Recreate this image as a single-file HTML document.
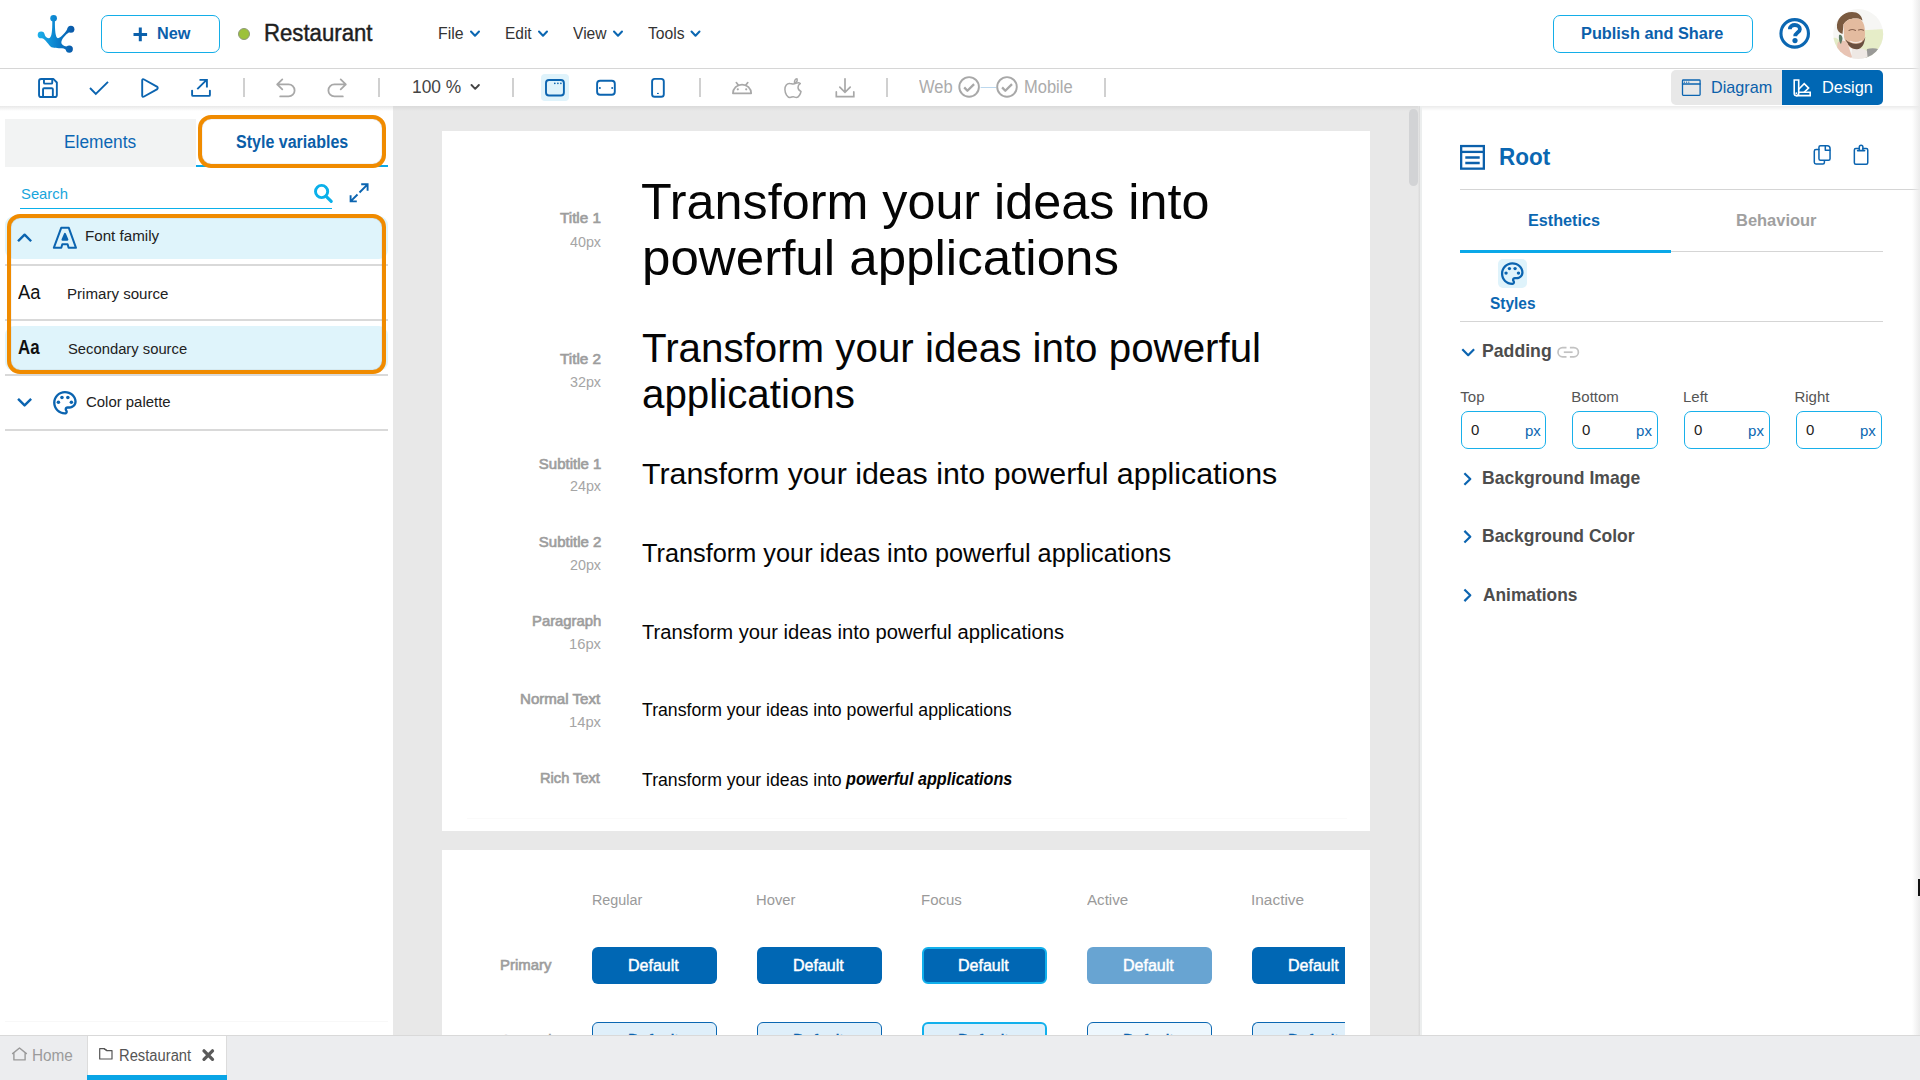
<!DOCTYPE html>
<html><head><meta charset="utf-8"><style>
*{margin:0;padding:0;box-sizing:border-box}
html,body{width:1920px;height:1080px;overflow:hidden;background:#fff;font-family:"Liberation Sans",sans-serif;position:relative}
.t{position:absolute;line-height:1;white-space:nowrap;transform-origin:0 0}
.a{position:absolute}
svg{position:absolute;overflow:visible}

</style></head><body>
<!-- top bar -->
<div class="a" style="left:0;top:68px;width:1920px;height:1px;background:#d6d6d6"></div>
<!-- canvas bg -->
<div class="a" style="left:393px;top:106px;width:1027px;height:930px;background:#e8e8e8"></div>
<div class="a" style="left:393px;top:106px;width:1027px;height:5px;background:linear-gradient(#dadada,rgba(232,232,232,0))"></div>
<!-- left panel -->
<div class="a" style="left:0;top:106px;width:393px;height:930px;background:#fff"></div>
<div class="a" style="left:0;top:106px;width:393px;height:5px;background:linear-gradient(#e8e8e8,rgba(255,255,255,0))"></div>
<div class="a" style="left:5px;top:119px;width:191px;height:48px;background:#f2f3f3"></div>
<div class="a" style="left:196px;top:165px;width:192px;height:2px;background:#0aa8e8"></div>
<div class="a" style="left:20px;top:207.6px;width:312px;height:1.4px;background:#0ab0ea"></div>
<div class="a" style="left:5px;top:216px;width:383px;height:43px;background:#dff4fb;border-radius:9px"></div>
<div class="a" style="left:5px;top:326px;width:383px;height:45px;background:#dff4fb;border-radius:9px"></div>
<div class="a" style="left:5px;top:264px;width:383px;height:2px;background:#d9d9d9"></div>
<div class="a" style="left:5px;top:319px;width:383px;height:2px;background:#d9d9d9"></div>
<div class="a" style="left:5px;top:374px;width:383px;height:2px;background:#d9d9d9"></div>
<div class="a" style="left:5px;top:429px;width:383px;height:2px;background:#d9d9d9"></div>
<div class="a" style="left:5px;top:1021px;width:383px;height:1px;background:#f8f8f8"></div>
<div class="a" style="left:198px;top:115px;width:188px;height:52.5px;border:4px solid #f08b00;border-radius:13px;box-shadow:inset 0 0 1px rgba(0,0,0,.45)"></div>
<div class="a" style="left:7px;top:214px;width:379px;height:159.5px;border:4px solid #f08b00;border-radius:13px;box-shadow:inset 0 0 1px rgba(0,0,0,.45)"></div>
<!-- cards -->
<div class="a" style="left:442px;top:131px;width:928px;height:700px;background:#fff"></div>
<div class="a" style="left:442px;top:850px;width:928px;height:186px;background:#fff"></div>
<div class="a" style="left:467px;top:818px;width:880px;height:1px;background:#fafafa"></div>
<!-- scrollbar -->
<div class="a" style="left:1409px;top:109px;width:9px;height:77px;border-radius:5px;background:#d2d3d5"></div>
<!-- right panel -->
<div class="a" style="left:1418px;top:106px;width:2px;height:930px;background:linear-gradient(90deg,#e6e6e6,#d8d8d8)"></div>
<div class="a" style="left:1420px;top:106px;width:500px;height:930px;background:#fff;border-left:2px solid #eceeee"></div>
<div class="a" style="left:1422px;top:106px;width:498px;height:5px;background:linear-gradient(#ebebeb,rgba(255,255,255,0))"></div>
<div class="a" style="left:1460px;top:188.5px;width:460px;height:1px;background:#d5d5d5"></div>
<div class="a" style="left:1671px;top:250.5px;width:212px;height:1px;background:#d5d5d5"></div>
<div class="a" style="left:1460px;top:249.5px;width:211px;height:3px;background:#0aa8e8"></div>
<div class="a" style="left:1498px;top:259px;width:29px;height:29px;background:#dff3fb;border-radius:5px"></div>
<div class="a" style="left:1460px;top:321px;width:423px;height:1px;background:#d5d5d5"></div>
<div class="a" style="left:1460.5px;top:411px;width:85.5px;height:38px;border:1.5px solid #18b0ea;border-radius:7px"></div>
<div class="a" style="left:1571.5px;top:411px;width:86px;height:38px;border:1.5px solid #18b0ea;border-radius:7px"></div>
<div class="a" style="left:1683.5px;top:411px;width:86px;height:38px;border:1.5px solid #18b0ea;border-radius:7px"></div>
<div class="a" style="left:1795.5px;top:411px;width:86.5px;height:38px;border:1.5px solid #18b0ea;border-radius:7px"></div>
<div class="a" style="left:1912px;top:0;width:8px;height:1036px;background:linear-gradient(90deg,rgba(235,235,235,0),#ebebeb)"></div>
<!-- top bar buttons -->
<div class="a" style="left:101px;top:15px;width:119px;height:38px;border:1.5px solid #14aee8;border-radius:7px"></div>
<div class="a" style="left:1553px;top:15px;width:200px;height:37.5px;border:1.5px solid #14aee8;border-radius:7px"></div>
<div class="a" style="left:238.2px;top:27.8px;width:12px;height:12px;border-radius:50%;background:#9cc13a;border:1px solid #8f9a7a"></div>
<!-- toolbar -->
<div class="a" style="left:541px;top:74px;width:28px;height:27px;background:#dff3fb;border-radius:4px"></div>
<div class="a" style="left:1671px;top:70px;width:212px;height:35px;background:#e8e8e8;border-radius:5px"></div>
<div class="a" style="left:1782px;top:70px;width:101px;height:35px;background:#0067b4;border-radius:0 5px 5px 0"></div>
<!-- card2 buttons -->
<div class="a" style="left:592px;top:947px;width:125px;height:37px;background:#0067b4;border-radius:6px"></div>
<div class="a" style="left:757px;top:947px;width:125px;height:37px;background:#0067b4;border-radius:6px"></div>
<div class="a" style="left:922px;top:947px;width:125px;height:37px;background:#0067b4;border-radius:6px;border:2px solid #12b0ec"></div>
<div class="a" style="left:1087px;top:947px;width:125px;height:37px;background:#68a4d2;border-radius:6px"></div>
<div class="a" style="left:1252px;top:947px;width:93px;height:37px;background:#0067b4;border-radius:6px 0 0 6px"></div>
<div class="a" style="left:592px;top:1022px;width:125px;height:37px;background:#dfeffa;border-radius:6px;border:1.5px solid #0a67b2"></div>
<div class="a" style="left:757px;top:1022px;width:125px;height:37px;background:#dfeffa;border-radius:6px;border:1.5px solid #0a67b2"></div>
<div class="a" style="left:922px;top:1022px;width:125px;height:37px;background:#dfeffa;border-radius:6px;border:2px solid #12b0ec"></div>
<div class="a" style="left:1087px;top:1022px;width:125px;height:37px;background:#eef7fd;border-radius:6px;border:1.5px solid #0a67b2"></div>
<div class="a" style="left:1252px;top:1022px;width:93px;height:37px;background:#dfeffa;border-radius:6px 0 0 6px;border:1.5px solid #0a67b2;border-right:none"></div>
<svg width="1920" height="1080" viewBox="0 0 1920 1080" style="left:0;top:0" fill="none" stroke-linecap="round" stroke-linejoin="round">
<defs>
<linearGradient id="lg" x1="38" y1="0" x2="73" y2="0" gradientUnits="userSpaceOnUse"><stop offset="0" stop-color="#1db0ea"/><stop offset="0.55" stop-color="#0a7fcc"/><stop offset="1" stop-color="#0a59a8"/></linearGradient>
<filter id="bl" x="-20%" y="-20%" width="140%" height="140%"><feGaussianBlur stdDeviation="0.7"/></filter>
<clipPath id="av"><circle cx="1858.2" cy="34" r="25"/></clipPath>
</defs>
<!-- logo -->
<g fill="url(#lg)" stroke="none">
<circle cx="53.6" cy="18.2" r="3.3"/><circle cx="70.9" cy="29.3" r="3.5"/><circle cx="41.1" cy="34.9" r="3.4"/><circle cx="69.3" cy="49.1" r="3.6"/>
<path d="M40.5,37.5 C44.5,38.5 47.5,43 50.5,46.5 C53,48.5 58,48 62,48.2 C64.5,48.5 66,49.5 67.5,51 L70.5,46.5 C68,47.2 63,46.5 61.5,43.5 C60.5,40 65,35 70,31.5 L68.3,27.2 C66,32 61,37.5 58,38.2 C55.5,38.3 54.8,30 54.9,21 L52.3,21 C52.3,30 52,37.8 49,38.2 C46.5,38.4 44.5,36 43.8,32.5 Z"/>
</g>
<!-- plus -->
<path d="M140.3,27.6 V41.2 M133.5,34.4 H147.1" stroke="#0b60ab" stroke-width="3" stroke-linecap="butt"/>
<!-- menu chevrons -->
<g stroke="#0b67b2" stroke-width="2">
<path d="M471,31.5 L475,35.8 L479,31.5"/><path d="M539,31.5 L543,35.8 L547,31.5"/><path d="M614,31.5 L618,35.8 L622,31.5"/><path d="M691.5,31.5 L695.5,35.8 L699.5,31.5"/>
</g>
<!-- help -->
<circle cx="1794.7" cy="33.4" r="13.75" stroke="#0b67b2" stroke-width="3.1"/>
<path d="M1789.9,29.3 C1789.9,26.4 1792.2,25 1794.9,25 C1797.8,25 1799.9,26.8 1799.9,29.2 C1799.9,32.4 1795.2,32.8 1795.2,36.2" stroke="#0b67b2" stroke-width="3.8" stroke-linecap="butt"/>
<circle cx="1795" cy="40.6" r="2.6" fill="#0b67b2" stroke="none"/>
<!-- avatar -->
<g clip-path="url(#av)" stroke="none">
<rect x="1830" y="5" width="60" height="60" fill="#f6f6f4"/>
<path d="M1860,30 C1868,31 1880,28 1886,30 V58 H1856 Z" fill="#e6edc8"/>
<path d="M1833,38 C1836,37 1840,40 1842,44 L1840,60 H1832 Z" fill="#e3ebc6"/>
<path d="M1867,49 C1872,47.5 1880,48 1884,52 V62 H1865 Z" fill="#9a9a98"/>
<path d="M1852,49 C1857,48 1864,48 1867,51 L1868,62 H1851 Z" fill="#eee8e4"/>
<path d="M1837,28 C1836,19 1843,12 1852,12 C1858,12 1861.5,15 1862.5,20.5 L1859,18.8 C1852,17.5 1846,19.5 1843.5,24.5 L1842.5,34 C1839.5,33 1837.5,31 1837,28 Z" fill="#7a5a40"/>
<path d="M1843.5,24.5 C1846,19.5 1852,17.5 1859,18.8 C1863.5,20.5 1865,26 1865,34 C1865,42 1861.5,48.5 1856,49 C1849.5,49.5 1845.5,44 1844,37 Z" fill="#e3bb9f"/>
<path d="M1845.5,39.5 C1848,45.5 1851.5,49.5 1857,49.3 C1862,49 1864.5,44 1865.3,37 C1863.5,41.5 1861,43.5 1857,43.8 C1852,44 1848,42 1845.5,39.5 Z" fill="#6a5040"/>
<path d="M1849,30.5 C1851,29.3 1853.5,29.3 1855.5,30.5 M1858.5,30 C1860,29.3 1862,29.3 1863.5,30.3" stroke="#8a6450" stroke-width="1.1" fill="none"/>
<path d="M1850.5,41.3 C1853.5,43 1858,43 1861.5,41" stroke="#f4e8e0" stroke-width="1.2" fill="none"/>
<path d="M1837.5,43 C1840,39.5 1845,39.5 1847.5,43 L1852,57 C1847,61 1840,60 1836.5,55 Z" fill="#e8c4b4"/>
<path d="M1839,35 C1841,34 1842.5,36 1842.5,39 L1841,44 C1839.5,43 1838.5,39 1839,35 Z" fill="#5d7a66"/>
</g>
<!-- toolbar blue icons -->
<g stroke="#0b64b0" stroke-width="1.9">
<path d="M41.2,78.95 H53.3 L56.85,82.5 V94.9 Q56.85,97.05 54.7,97.05 H41.2 Q39.05,97.05 39.05,94.9 V81.1 Q39.05,78.95 41.2,78.95 Z"/>
<path d="M43.95,79.2 V82.7 Q43.95,83.65 44.9,83.65 H51.3 Q52.25,83.65 52.25,82.7 V79.2"/>
<path d="M43.05,96.8 V89.3 Q43.05,88.25 44.1,88.25 H51.8 Q52.85,88.25 52.85,89.3 V96.8"/>
<path d="M90,88 L95.8,93.9 L108,81.8" stroke-linecap="butt" stroke-linejoin="miter"/>
<path d="M142.2,80.6 Q142.2,78.5 144.1,79.5 L156.9,86.6 Q158.6,88 156.9,89.4 L144.1,96.5 Q142.2,97.5 142.2,95.4 Z"/>
<path d="M192.1,90.6 V95 Q192.1,95.9 193,95.9 H209 Q209.9,95.9 209.9,95 V90.6"/>
<path d="M197.3,89.1 L206.6,79.8 M199.5,79.85 H206.9 V87.5" stroke-linecap="butt" stroke-linejoin="miter"/>
</g>
<!-- separators -->
<g stroke="#d0d0d0" stroke-width="2" stroke-linecap="butt">
<path d="M244,78 V97"/><path d="M379,78 V97"/><path d="M513,78 V97"/><path d="M700,78 V97"/><path d="M887,78 V97"/><path d="M1105,78 V97"/>
</g>
<!-- undo redo -->
<g stroke="#a8a8a8" stroke-width="1.8">
<path d="M282.3,79.4 L277.2,84.4 L282.3,89.4 M277.2,84.4 H288.6 A6,6 0 0 1 288.6,96.4 H280.2"/>
<path d="M340.7,79.4 L345.8,84.4 L340.7,89.4 M345.8,84.4 H334.4 A6,6 0 0 0 334.4,96.4 H342.8"/>
</g>
<path d="M471.5,85 L475.2,88.8 L478.9,85" stroke="#444" stroke-width="1.9"/>
<!-- device icons -->
<g stroke="#0b64b0" stroke-width="1.9">
<rect x="546" y="80" width="17.9" height="15.5" rx="3"/>
<rect x="597.1" y="80.8" width="17.7" height="14" rx="3"/>
<rect x="652.1" y="78.9" width="11.7" height="17.9" rx="2.6"/>
</g>
<g fill="#0b64b0" stroke="none">
<circle cx="554.8" cy="83.3" r="0.85"/><circle cx="557.9" cy="83.3" r="0.85"/><circle cx="560.9" cy="83.3" r="0.85"/>
<circle cx="599.9" cy="87.9" r="1"/><circle cx="612.2" cy="87.9" r="1"/>
<rect x="657" y="92.9" width="1.8" height="1.1"/>
</g>
<!-- gray icons -->
<g stroke="#a8a8a8" stroke-width="1.7">
<path d="M732.9,93.3 A9,8.6 0 0 1 751.2,93.3 Z"/>
<path d="M736.3,82.6 L738.4,85.3 M747.8,82.6 L745.7,85.3"/>
<path d="M790,83.5 C787,83 784.8,86 784.9,89.5 C785,93.5 787.5,97.7 790,97.5 C791.5,97.4 792,96.7 793.2,96.7 C794.4,96.7 795,97.5 796.4,97.5 C798.8,97.5 800.6,93.5 801,91.5 C799,90.7 798,89 798,87.3 C798,85.5 799,84.3 800.3,83.6 C799.2,82.5 797.7,82.6 796.6,83.1 C795.3,83.6 794.3,84 793.2,84 C792,84 791.2,83.6 790,83.5 Z" stroke-width="1.5"/>
<path d="M794.5,83.2 C794.3,80.5 795.3,79 797,78.7 C797.6,80.6 796.5,82.4 794.5,83.2 Z" stroke-width="1.5"/>
<path d="M845,78.8 V92.3 M839.8,87.2 L845,92.4 L850.2,87.2 M836.3,91.9 V96.7 H853.8 V91.9" stroke-linejoin="miter"/>
</g>
<g fill="#a8a8a8" stroke="none"><circle cx="737.8" cy="89.3" r="1.1"/><circle cx="746.2" cy="89.3" r="1.1"/></g>
<!-- web mobile -->
<path d="M981,87.5 H996" stroke="#bcd8ee" stroke-width="1"/>
<g stroke="#a8a8a8" stroke-width="1.9">
<circle cx="969.1" cy="86.9" r="9.8"/><circle cx="1007" cy="86.9" r="9.8"/>
<path d="M964.2,87.4 L967.4,90.7 L974.1,84.1" stroke-linecap="butt" stroke-width="2.3"/>
<path d="M1002.1,87.4 L1005.3,90.7 L1012,84.1" stroke-linecap="butt" stroke-width="2.3"/>
</g>
<!-- diagram / design icons -->
<g stroke="#0b64b0" stroke-width="1.3">
<rect x="1682.5" y="80" width="17.6" height="15.4" rx="0.8"/><path d="M1682.5,84 H1700.1"/>
</g>
<g fill="#0b64b0"><circle cx="1684.4" cy="82.2" r="0.6"/><circle cx="1686.6" cy="82.2" r="0.6"/><circle cx="1688.8" cy="82.2" r="0.6"/></g>
<g stroke="#fff" stroke-width="1.6" stroke-linejoin="miter">
<path d="M1794.2,80 H1798.7 V93.5 A2.25,2.25 0 0 1 1794.2,93.5 Z"/>
<path d="M1798.7,89.2 L1804.2,83.7 L1808.6,88.1 L1804.3,92.2"/>
<path d="M1798.7,92.2 H1810.2 V95.6 H1796.4"/>
</g>
<circle cx="1796.35" cy="93.2" r="0.9" fill="#fff"/>
<!-- left panel icons -->
<g stroke="#0b64b0" stroke-width="2.4" stroke-linecap="butt">
<path d="M18.9,240.4 L24.6,234.7 L30.3,240.4" stroke-linecap="square"/>
<path d="M18.9,399.7 L24.6,405.4 L30.3,399.7" stroke-linecap="square"/>
</g>
<g stroke="#0b64b0" stroke-width="2" stroke-linejoin="round">
<path d="M61.2,227.8 H68.8 L76,247.85 H68.6 L67.6,244.2 H62.3 L61.3,247.85 H53.8 Z"/>
<path d="M64.95,233.8 L67.4,239.7 H62.5 Z" fill="#0b64b0"/>
</g>
<g stroke="#0ab0ea" stroke-width="2.9">
<circle cx="321.6" cy="191.5" r="6.1"/><path d="M326.4,196.6 L331.2,201.3" stroke-width="3.2"/>
</g>
<g stroke="#0b64b0" stroke-width="1.9" stroke-linecap="butt" stroke-linejoin="miter">
<path d="M350.6,201.4 L357.5,194.5 M359.5,192.5 L367.6,184.3 M361.2,184.3 H367.6 V190.7 M350.6,195.2 V201.4 H356.8"/>
</g>
<g transform="translate(50.74,388.64) scale(1.18)" fill="#0b64b0" stroke="none">
<path d="M12 22C6.49 22 2 17.51 2 12S6.49 2 12 2s10 4.04 10 9c0 3.31-2.690 6-6 6h-1.77c-.28 0-.5.22-.5.5 0 .12.05.23.13.33.41.47.64 1.06.64 1.67 0 1.380-1.12 2.500-2.500 2.5zm0-18c-4.41 0-8 3.59-8 8s3.59 8 8 8c.28 0 .5-.22.5-.5 0-.16-.08-.28-.14-.35-.41-.46-.63-1.050-.63-1.650 0-1.380 1.12-2.500 2.500-2.500H16c2.21 0 4-1.79 4-4 0-3.86-3.59-7-8-7z"/>
<circle cx="6.5" cy="11.5" r="1.5"/><circle cx="9.5" cy="7.5" r="1.5"/><circle cx="14.5" cy="7.5" r="1.5"/><circle cx="17.5" cy="11.5" r="1.5"/>
</g>
<!-- right panel icons -->
<g stroke="#0b60ab" stroke-width="2.3" stroke-linecap="butt" stroke-linejoin="miter">
<rect x="1461.15" y="146.05" width="22.7" height="22.6"/><path d="M1461,151.9 H1484"/>
<path d="M1465.3,157.5 H1479.7 M1465.3,163 H1479.7" stroke-width="2.5"/>
</g>
<g stroke="#0b64b0" stroke-width="1.5">
<path d="M1818.9,149.6 H1816 Q1814.3,149.6 1814.3,151.3 V162.3 Q1814.3,164 1816,164 H1822.9 Q1824.4,164 1824.4,162.5 V161"/>
<path d="M1820.5,145.65 H1827.3 Q1830.05,145.65 1830.05,148.4 V158.7 Q1830.05,160.25 1828.5,160.25 H1820.5 Q1818.95,160.25 1818.95,158.7 V147.2 Q1818.95,145.65 1820.5,145.65 Z"/>
<path d="M1825.3,145.9 V150.3 H1829.9"/>
<path d="M1859.3,148.5 H1855.8 Q1854.35,148.5 1854.35,150 V162.8 Q1854.35,164.25 1855.8,164.25 H1866.3 Q1867.75,164.25 1867.75,162.8 V150 Q1867.75,148.5 1866.3,148.5 H1862.9"/>
<path d="M1859.3,150 V147 A1.8,1.8 0 0 1 1862.9,147 V150"/>
<path d="M1857.7,150.6 H1864.5" stroke-width="1.8"/>
</g>
<g transform="translate(1498.7,260.1) scale(1.13)" fill="#0b64b0" stroke="none">
<path d="M12 22C6.49 22 2 17.51 2 12S6.49 2 12 2s10 4.04 10 9c0 3.31-2.690 6-6 6h-1.77c-.28 0-.5.22-.5.5 0 .12.05.23.13.33.41.47.64 1.06.64 1.67 0 1.380-1.12 2.500-2.500 2.5zm0-18c-4.41 0-8 3.59-8 8s3.59 8 8 8c.28 0 .5-.22.5-.5 0-.16-.08-.28-.14-.35-.41-.46-.63-1.050-.63-1.650 0-1.380 1.12-2.500 2.500-2.500H16c2.21 0 4-1.79 4-4 0-3.86-3.59-7-8-7z"/>
<circle cx="6.5" cy="11.5" r="1.5"/><circle cx="9.5" cy="7.5" r="1.5"/><circle cx="14.5" cy="7.5" r="1.5"/><circle cx="17.5" cy="11.5" r="1.5"/>
</g>
<g stroke="#0b64b0" stroke-width="2.2" stroke-linecap="butt">
<path d="M1462.3,349.3 L1468.2,355.2 L1474.1,349.3"/>
<path d="M1464.4,473.2 L1470.3,479 L1464.4,484.8"/>
<path d="M1464.4,530.9 L1470.3,536.7 L1464.4,542.5"/>
<path d="M1464.4,589.5 L1470.3,595.3 L1464.4,601.1"/>
</g>
<g stroke="#c2c2c2" stroke-width="1.7" stroke-linecap="butt">
<path d="M1566.5,347.6 H1562.6 A4.6,4.6 0 0 0 1562.6,356.8 H1566.5"/>
<path d="M1569.9,347.6 H1573.8 A4.6,4.6 0 0 1 1573.8,356.8 H1569.9"/>
<path d="M1563.8,352.2 H1572.6"/>
</g>
<!-- bottom bar icons placed in post layer -->
</svg>

<div class="t" style="left:156.54px;top:25.01px;font-size:17px;font-weight:bold;font-style:normal;color:#0b60ab;transform:scaleX(0.9559);">New</div>
<div class="t" style="left:264.05px;top:21.78px;font-size:23.3px;font-weight:normal;-webkit-text-stroke:0.45px #1e1e1e;font-style:normal;color:#1e1e1e;transform:scaleX(0.9517);">Restaurant</div>
<div class="t" style="left:438.41px;top:26.16px;font-size:16px;font-weight:normal;font-style:normal;color:#333;transform:scaleX(0.9886);">File</div>
<div class="t" style="left:504.83px;top:26.16px;font-size:16px;font-weight:normal;font-style:normal;color:#333;transform:scaleX(0.9659);">Edit</div>
<div class="t" style="left:573.00px;top:26.16px;font-size:16px;font-weight:normal;font-style:normal;color:#333;transform:scaleX(0.9760);">View</div>
<div class="t" style="left:648.40px;top:26.16px;font-size:16px;font-weight:normal;font-style:normal;color:#333;transform:scaleX(0.9799);">Tools</div>
<div class="t" style="left:1581.03px;top:25.78px;font-size:16.8px;font-weight:bold;font-style:normal;color:#0b60ab;transform:scaleX(0.9720);">Publish and Share</div>
<div class="t" style="left:411.81px;top:79.39px;font-size:17.5px;font-weight:normal;font-style:normal;color:#444;transform:scaleX(0.9925);">100 %</div>
<div class="t" style="left:919.00px;top:79.19px;font-size:17.5px;font-weight:normal;font-style:normal;color:#ababab;transform:scaleX(0.9446);">Web</div>
<div class="t" style="left:1024.06px;top:79.19px;font-size:17.5px;font-weight:normal;font-style:normal;color:#ababab;transform:scaleX(0.9434);">Mobile</div>
<div class="t" style="left:1710.55px;top:78.61px;font-size:17px;font-weight:normal;font-style:normal;color:#0b60ab;transform:scaleX(0.9512);">Diagram</div>
<div class="t" style="left:1821.54px;top:78.61px;font-size:17px;font-weight:normal;font-style:normal;color:#fff;transform:scaleX(0.9619);">Design</div>
<div class="t" style="left:64.32px;top:134.10px;font-size:17.6px;font-weight:normal;font-style:normal;color:#0b66b4;transform:scaleX(0.9829);">Elements</div>
<div class="t" style="left:235.60px;top:134.10px;font-size:17.6px;font-weight:bold;font-style:normal;color:#0b5ea8;transform:scaleX(0.9105);">Style variables</div>
<div class="t" style="left:20.50px;top:186.64px;font-size:14.6px;font-weight:normal;font-style:normal;color:#17a6dc;transform:scaleX(1.0147);">Search</div>
<div class="t" style="left:84.82px;top:227.76px;font-size:15.4px;font-weight:normal;font-style:normal;color:#222;transform:scaleX(0.9843);">Font family</div>
<div class="t" style="left:17.50px;top:283.41px;font-size:19.6px;font-weight:normal;font-style:normal;color:#111;transform:scaleX(0.9348);">Aa</div>
<div class="t" style="left:67.01px;top:285.83px;font-size:15.2px;font-weight:normal;font-style:normal;color:#222;transform:scaleX(0.9934);">Primary source</div>
<div class="t" style="left:17.50px;top:338.41px;font-size:19.6px;font-weight:bold;font-style:normal;color:#111;transform:scaleX(0.8604);">Aa</div>
<div class="t" style="left:68.00px;top:340.83px;font-size:15.2px;font-weight:normal;font-style:normal;color:#222;transform:scaleX(0.9732);">Secondary source</div>
<div class="t" style="left:85.80px;top:393.83px;font-size:15.2px;font-weight:normal;font-style:normal;color:#222;transform:scaleX(0.9829);">Color palette</div>
<div class="t" style="left:560.40px;top:210.31px;font-size:15px;font-weight:normal;-webkit-text-stroke:0.65px #9d9d9d;font-style:normal;color:#9d9d9d;transform:scaleX(1.0163);">Title 1</div>
<div class="t" style="left:569.50px;top:234.40px;font-size:15px;font-weight:normal;font-style:normal;color:#a5a5a5;transform:scaleX(0.9538);">40px</div>
<div class="t" style="left:560.25px;top:351.43px;font-size:15px;font-weight:normal;-webkit-text-stroke:0.65px #9d9d9d;font-style:normal;color:#9d9d9d;transform:scaleX(1.0201);">Title 2</div>
<div class="t" style="left:569.50px;top:374.05px;font-size:15px;font-weight:normal;font-style:normal;color:#a5a5a5;transform:scaleX(0.9538);">32px</div>
<div class="t" style="left:538.80px;top:456.10px;font-size:15px;font-weight:normal;-webkit-text-stroke:0.65px #9d9d9d;font-style:normal;color:#9d9d9d;">Subtitle 1</div>
<div class="t" style="left:569.50px;top:478.30px;font-size:15px;font-weight:normal;font-style:normal;color:#a5a5a5;transform:scaleX(0.9538);">24px</div>
<div class="t" style="left:538.80px;top:533.90px;font-size:15px;font-weight:normal;-webkit-text-stroke:0.65px #9d9d9d;font-style:normal;color:#9d9d9d;">Subtitle 2</div>
<div class="t" style="left:569.50px;top:556.90px;font-size:15px;font-weight:normal;font-style:normal;color:#a5a5a5;transform:scaleX(0.9538);">20px</div>
<div class="t" style="left:532.11px;top:612.80px;font-size:15px;font-weight:normal;-webkit-text-stroke:0.65px #9d9d9d;font-style:normal;color:#9d9d9d;transform:scaleX(0.9883);">Paragraph</div>
<div class="t" style="left:568.52px;top:635.80px;font-size:15px;font-weight:normal;font-style:normal;color:#a5a5a5;transform:scaleX(0.9835);">16px</div>
<div class="t" style="left:519.69px;top:691.00px;font-size:15px;font-weight:normal;-webkit-text-stroke:0.65px #9d9d9d;font-style:normal;color:#9d9d9d;transform:scaleX(1.0056);">Normal Text</div>
<div class="t" style="left:568.52px;top:713.50px;font-size:15px;font-weight:normal;font-style:normal;color:#a5a5a5;transform:scaleX(0.9835);">14px</div>
<div class="t" style="left:540.02px;top:770.30px;font-size:15px;font-weight:normal;-webkit-text-stroke:0.65px #9d9d9d;font-style:normal;color:#9d9d9d;transform:scaleX(0.9753);">Rich Text</div>
<div class="t" style="left:641.19px;top:176.58px;font-size:50px;font-weight:normal;font-style:normal;color:#050505;transform:scaleX(1.0059);">Transform your ideas into</div>
<div class="t" style="left:641.93px;top:233.28px;font-size:50px;font-weight:normal;font-style:normal;color:#050505;transform:scaleX(1.0217);">powerful applications</div>
<div class="t" style="left:642.25px;top:327.84px;font-size:40px;font-weight:normal;font-style:normal;color:#050505;transform:scaleX(1.0077);">Transform your ideas into powerful</div>
<div class="t" style="left:641.99px;top:373.64px;font-size:40px;font-weight:normal;font-style:normal;color:#050505;transform:scaleX(1.0077);">applications</div>
<div class="t" style="left:642.10px;top:458.91px;font-size:30px;font-weight:normal;font-style:normal;color:#050505;transform:scaleX(1.0123);">Transform your ideas into powerful applications</div>
<div class="t" style="left:642.00px;top:541.04px;font-size:25px;font-weight:normal;font-style:normal;color:#050505;transform:scaleX(1.0120);">Transform your ideas into powerful applications</div>
<div class="t" style="left:642.40px;top:622.09px;font-size:20px;font-weight:normal;font-style:normal;color:#050505;transform:scaleX(1.0087);">Transform your ideas into powerful applications</div>
<div class="t" style="left:642.00px;top:702.29px;font-size:17.5px;font-weight:normal;font-style:normal;color:#050505;transform:scaleX(1.0098);">Transform your ideas into powerful applications</div>
<div class="t" style="left:642.00px;top:772.19px;font-size:17.5px;font-weight:normal;font-style:normal;color:#050505;transform:scaleX(1.0098);">Transform your ideas into</div>
<div class="t" style="left:846.42px;top:770.69px;font-size:17.5px;font-weight:bold;font-style:italic;color:#050505;transform:scaleX(0.9247);">powerful applications</div>
<div class="t" style="left:591.77px;top:891.88px;font-size:15.5px;font-weight:normal;font-style:normal;color:#9a9a9a;transform:scaleX(0.9262);">Regular</div>
<div class="t" style="left:756.45px;top:891.88px;font-size:15.5px;font-weight:normal;font-style:normal;color:#9a9a9a;transform:scaleX(0.9531);">Hover</div>
<div class="t" style="left:921.23px;top:891.88px;font-size:15.5px;font-weight:normal;font-style:normal;color:#9a9a9a;transform:scaleX(0.9672);">Focus</div>
<div class="t" style="left:1087.40px;top:891.88px;font-size:15.5px;font-weight:normal;font-style:normal;color:#9a9a9a;transform:scaleX(0.9762);">Active</div>
<div class="t" style="left:1251.11px;top:891.88px;font-size:15.5px;font-weight:normal;font-style:normal;color:#9a9a9a;transform:scaleX(0.9943);">Inactive</div>
<div class="t" style="left:499.84px;top:957.38px;font-size:15.5px;font-weight:normal;-webkit-text-stroke:0.65px #9d9d9d;font-style:normal;color:#9d9d9d;transform:scaleX(0.9632);">Primary</div>
<div class="t" style="left:628.41px;top:956.99px;font-size:16.2px;font-weight:normal;-webkit-text-stroke:0.45px #fff;font-style:normal;color:#fff;transform:scaleX(0.9903);">Default</div>
<div class="t" style="left:793.41px;top:956.99px;font-size:16.2px;font-weight:normal;-webkit-text-stroke:0.45px #fff;font-style:normal;color:#fff;transform:scaleX(0.9903);">Default</div>
<div class="t" style="left:958.41px;top:956.99px;font-size:16.2px;font-weight:normal;-webkit-text-stroke:0.45px #fff;font-style:normal;color:#fff;transform:scaleX(0.9903);">Default</div>
<div class="t" style="left:1123.41px;top:956.99px;font-size:16.2px;font-weight:normal;-webkit-text-stroke:0.45px #fff;font-style:normal;color:#fff;transform:scaleX(0.9903);">Default</div>
<div class="t" style="left:1288.41px;top:956.99px;font-size:16.2px;font-weight:normal;-webkit-text-stroke:0.45px #fff;font-style:normal;color:#fff;transform:scaleX(0.9903);">Default</div>
<div class="t" style="left:500.80px;top:1032.48px;font-size:15.5px;font-weight:normal;-webkit-text-stroke:0.45px #9d9d9d;font-style:normal;color:#9d9d9d;transform:scaleX(0.9632);">Secondary</div>
<div class="t" style="left:628.41px;top:1032.29px;font-size:16.2px;font-weight:normal;-webkit-text-stroke:0.45px #0b64b0;font-style:normal;color:#0b64b0;transform:scaleX(0.9903);">Default</div>
<div class="t" style="left:793.41px;top:1032.29px;font-size:16.2px;font-weight:normal;-webkit-text-stroke:0.45px #0b64b0;font-style:normal;color:#0b64b0;transform:scaleX(0.9903);">Default</div>
<div class="t" style="left:958.41px;top:1032.29px;font-size:16.2px;font-weight:normal;-webkit-text-stroke:0.45px #0b64b0;font-style:normal;color:#0b64b0;transform:scaleX(0.9903);">Default</div>
<div class="t" style="left:1123.41px;top:1032.29px;font-size:16.2px;font-weight:normal;-webkit-text-stroke:0.45px #0b64b0;font-style:normal;color:#0b64b0;transform:scaleX(0.9903);">Default</div>
<div class="t" style="left:1288.41px;top:1032.29px;font-size:16.2px;font-weight:normal;-webkit-text-stroke:0.45px #0b64b0;font-style:normal;color:#0b64b0;transform:scaleX(0.9903);">Default</div>
<div class="t" style="left:1499.22px;top:145.73px;font-size:23px;font-weight:bold;font-style:normal;color:#0b67b2;transform:scaleX(0.9766);">Root</div>
<div class="t" style="left:1528.39px;top:213.46px;font-size:16px;font-weight:bold;font-style:normal;color:#0b67b2;transform:scaleX(1.0122);">Esthetics</div>
<div class="t" style="left:1736.17px;top:213.46px;font-size:16px;font-weight:bold;font-style:normal;color:#a0a0a0;transform:scaleX(1.0284);">Behaviour</div>
<div class="t" style="left:1490.30px;top:296.36px;font-size:16px;font-weight:bold;font-style:normal;color:#0b67b2;transform:scaleX(0.9652);">Styles</div>
<div class="t" style="left:1481.67px;top:341.32px;font-size:19px;font-weight:bold;font-style:normal;color:#4d4d4d;transform:scaleX(0.9300);">Padding</div>
<div class="t" style="left:1460.30px;top:388.90px;font-size:15px;font-weight:normal;font-style:normal;color:#555;">Top</div>
<div class="t" style="left:1571.30px;top:388.90px;font-size:15px;font-weight:normal;font-style:normal;color:#555;">Bottom</div>
<div class="t" style="left:1683.00px;top:388.90px;font-size:15px;font-weight:normal;font-style:normal;color:#555;">Left</div>
<div class="t" style="left:1794.40px;top:388.90px;font-size:15px;font-weight:normal;font-style:normal;color:#555;">Right</div>
<div class="t" style="left:1471.00px;top:422.31px;font-size:15px;font-weight:normal;font-style:normal;color:#222;">0</div>
<div class="t" style="left:1525.00px;top:423.00px;font-size:15px;font-weight:normal;font-style:normal;color:#0b67b2;">px</div>
<div class="t" style="left:1582.10px;top:422.31px;font-size:15px;font-weight:normal;font-style:normal;color:#222;">0</div>
<div class="t" style="left:1636.10px;top:423.00px;font-size:15px;font-weight:normal;font-style:normal;color:#0b67b2;">px</div>
<div class="t" style="left:1694.10px;top:422.31px;font-size:15px;font-weight:normal;font-style:normal;color:#222;">0</div>
<div class="t" style="left:1748.10px;top:423.00px;font-size:15px;font-weight:normal;font-style:normal;color:#0b67b2;">px</div>
<div class="t" style="left:1806.00px;top:422.31px;font-size:15px;font-weight:normal;font-style:normal;color:#222;">0</div>
<div class="t" style="left:1860.00px;top:423.00px;font-size:15px;font-weight:normal;font-style:normal;color:#0b67b2;">px</div>
<div class="t" style="left:1481.67px;top:467.72px;font-size:19px;font-weight:bold;font-style:normal;color:#4d4d4d;transform:scaleX(0.9252);">Background Image</div>
<div class="t" style="left:1481.68px;top:525.82px;font-size:19px;font-weight:bold;font-style:normal;color:#4d4d4d;transform:scaleX(0.9205);">Background Color</div>
<div class="t" style="left:1482.60px;top:584.62px;font-size:19px;font-weight:bold;font-style:normal;color:#4d4d4d;transform:scaleX(0.9127);">Animations</div>
<div class="a" style="left:0;top:1035px;width:1920px;height:45px;background:#ecedef;border-top:1px solid #d9d9d9"></div>
<div class="a" style="left:87px;top:1036px;width:140px;height:44px;background:#fff;border-left:1px solid #dcdcdc;border-right:1px solid #dcdcdc"></div>
<div class="a" style="left:87px;top:1075px;width:140px;height:5px;background:#0aa5e6"></div>
<div class="a" style="left:1918px;top:879px;width:2px;height:17px;background:#111"></div>
<svg width="1920" height="1080" viewBox="0 0 1920 1080" style="left:0;top:0" fill="none" stroke-linecap="round" stroke-linejoin="round">
<path d="M12.6,1053.6 L19.5,1048 L26.4,1053.6 M13.9,1053.3 V1059.9 H25.1 V1053.3" stroke="#9a9a9a" stroke-width="1.4"/>
<path d="M99.7,1048.7 H104.2 L106.8,1050.6 H112 V1059 H99.7 Z" stroke="#555" stroke-width="1.2"/>
<path d="M104.2,1048.7 L106.8,1050.6" stroke="#555" stroke-width="1.2"/>
<path d="M204,1050.8 L212.5,1059.3 M212.5,1050.8 L204,1059.3" stroke="#5a5a5a" stroke-width="3.3" stroke-linecap="round"/>
</svg>

<div class="t" style="left:31.54px;top:1047.58px;font-size:16px;font-weight:normal;font-style:normal;color:#9b9b9b;transform:scaleX(0.9574);">Home</div>
<div class="t" style="left:118.58px;top:1047.58px;font-size:16px;font-weight:normal;font-style:normal;color:#555;transform:scaleX(0.9220);">Restaurant</div>
</body></html>
